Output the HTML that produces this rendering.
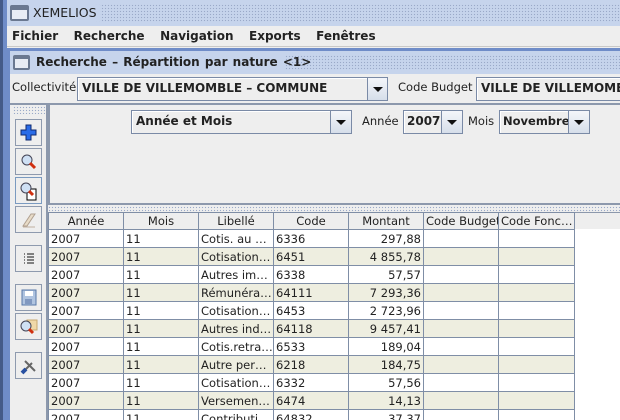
<!DOCTYPE html>
<html><head><meta charset="utf-8"><style>
*{margin:0;padding:0;box-sizing:border-box}
html{width:620px;height:420px;overflow:hidden}
body{width:620px;height:420px;overflow:hidden;background:#eeeeee;font-family:"DejaVu Sans","Liberation Sans",sans-serif;font-size:12px;color:#222;position:relative}
.a{position:absolute}
.dots{background-image:radial-gradient(#9aa9c8 0.7px,transparent 0.8px);background-size:3px 3px}
.combo{position:absolute;background:#eeeeee;border:1px solid #7a8aa6;box-shadow:inset 1px 1px 0 #fff;font-weight:bold;font-size:12px;line-height:21px;padding-left:4px;white-space:nowrap;overflow:hidden}
.combo .btn{position:absolute;right:0;top:0;bottom:0;width:21px;border-left:1px solid #7a8aa6;background:linear-gradient(#f4f6fa,#d6deea)}
.combo .btn:after{content:"";position:absolute;left:5px;top:9px;border-left:5px solid transparent;border-right:5px solid transparent;border-top:5px solid #111}
.tb{position:absolute;left:15px;width:27px;height:27px;border:1px solid #8e9aae;background:#eeeeee}
table{border-collapse:collapse;position:absolute;left:48px;top:212px;table-layout:fixed;width:526px}
td,th{height:18px;border:1px solid #7f8ea6;font-weight:normal;font-size:11.5px;padding:0 2px;white-space:nowrap;overflow:hidden;text-align:left;font-family:"DejaVu Sans",sans-serif;line-height:16px}
th{height:17px;text-align:center;background:#eeeeee;text-overflow:clip}
tbody tr:nth-child(odd) td{background:#fff}
tbody tr:nth-child(even) td{background:#eeeee0}
td.r{text-align:right}
</style></head><body>
<div class="a" style="left:0;top:0;width:3px;height:420px;background:#445a88"></div>
<div class="a" style="left:3px;top:0;width:4px;height:420px;background:#6f8cc8"></div>
<div class="a" style="left:7px;top:0;width:613px;height:26px;background:#c6d4ec"></div>
<div class="a dots" style="left:95px;top:4px;width:525px;height:18px"></div>
<div class="a" style="left:10px;top:5px;width:19px;height:16px;border:2px solid #6a7890;border-radius:2px;background:#e8ecf4;border-top-width:5px"></div>
<div class="a" style="left:33px;top:5px;font-size:12.5px;line-height:16px;background:#c6d4ec;padding-right:3px">XEMELIOS</div>
<div class="a" style="left:7px;top:26px;width:613px;height:21px;background:#eeeeee;border-bottom:1px solid #c8c8c8"></div>
<div class="a" style="left:12px;top:29px;font-weight:bold;font-size:12px;word-spacing:1px">Fichier&nbsp;&nbsp; Recherche&nbsp;&nbsp; Navigation&nbsp;&nbsp; Exports&nbsp;&nbsp; Fenêtres</div>
<div class="a" style="left:7px;top:48px;width:613px;height:372px;background:#6f8cc8"></div>
<div class="a" style="left:10px;top:51px;width:610px;height:369px;background:#eeeeee"></div>
<div class="a" style="left:10px;top:51px;width:610px;height:23px;background:#c6d4ec"></div>
<div class="a dots" style="left:285px;top:55px;width:335px;height:15px"></div>
<div class="a" style="left:13px;top:55px;width:17px;height:15px;border:2px solid #6a7890;border-radius:2px;background:#e8ecf4;border-top-width:4px"></div>
<div class="a" style="left:36px;top:55px;font-weight:bold;font-size:12px;line-height:15px;word-spacing:1px">Recherche – Répartition par nature &lt;1&gt;</div>
<div class="a" style="left:12px;top:80px;font-size:11.5px">Collectivité</div>
<div class="combo" style="left:77px;top:77px;width:311px;height:24px">VILLE DE VILLEMOMBLE – COMMUNE<span class="btn" style="width:20px"></span></div>
<div class="a" style="left:398px;top:80px;font-size:11.5px">Code Budget</div>
<div class="combo" style="left:476px;top:77px;width:150px;height:24px">VILLE DE VILLEMOMBLE</div>
<div class="a" style="left:10px;top:103px;width:610px;height:2px;background:#8c98ac"></div>
<div class="a dots" style="left:13px;top:106px;width:32px;height:8px"></div>
<div class="a" style="left:46px;top:104px;width:2px;height:316px;background:#8c98ac"></div>
<div class="tb" style="top:119px"><svg width="25" height="25"><path d="M10 5h5v5h5v5h-5v5h-5v-5h-5v-5h5z" fill="#2a6ce8" stroke="#102a70"/></svg></div>
<div class="tb" style="top:148px"><svg width="25" height="25"><circle cx="11" cy="11" r="5" fill="#cfe0f4" stroke="#445"/><path d="M14 14l5 5" stroke="#d03010" stroke-width="3"/></svg></div>
<div class="tb" style="top:177px;border-color:#7a9ac0"><svg width="25" height="25"><path d="M13 11h7v11h-9v-7" fill="#fff" stroke="#000"/><circle cx="10" cy="10" r="5" fill="#cfe0f4" stroke="#445"/><path d="M13 13l4 4" stroke="#d03010" stroke-width="3"/></svg></div>
<div class="tb" style="top:206px"><svg width="25" height="25"><path d="M7 19l8-12h4l-8 12z" fill="#e8dcc8" stroke="#b0a090"/><path d="M7 20h12" stroke="#c0b0a0"/></svg></div>
<div class="tb" style="top:245px"><svg width="25" height="25"><g stroke="#111"><path d="M8 8h1M8 11h1M8 14h1M8 17h1M11 8h7M11 11h7M11 14h7M11 17h7"/></g></svg></div>
<div class="tb" style="top:284px"><svg width="25" height="25"><rect x="6" y="5" width="14" height="15" fill="#b0c4e0" stroke="#5878a8"/><rect x="9" y="6" width="8" height="5" fill="#fff"/><rect x="9" y="14" width="7" height="5" fill="#8098c0"/></svg></div>
<div class="tb" style="top:313px"><svg width="25" height="25"><rect x="11" y="6" width="10" height="10" fill="#f0d8a8" stroke="#c8a870"/><circle cx="10" cy="12" r="5" fill="#cfe0f4" stroke="#445"/><path d="M13 15l4 4" stroke="#d03010" stroke-width="3"/></svg></div>
<div class="tb" style="top:352px"><svg width="25" height="25"><path d="M7 19l9-9M9 8l10 10" stroke="#666" stroke-width="2"/><path d="M6 20l4-4" stroke="#2850a0" stroke-width="4"/></svg></div>
<div class="a" style="left:48px;top:104px;width:572px;height:101px;border-left:2px solid #8c98ac;border-bottom:2px solid #8c98ac"></div>
<div class="combo" style="left:131px;top:110px;width:221px;height:24px">Année et Mois<span class="btn"></span></div>
<div class="a" style="left:362px;top:114px;font-size:11.5px">Année</div>
<div class="combo" style="left:403px;top:110px;width:60px;height:24px;padding-left:3px">2007<span class="btn"></span></div>
<div class="a" style="left:468px;top:114px;font-size:11.5px">Mois</div>
<div class="combo" style="left:499px;top:110px;width:91px;height:24px;font-size:11.5px;padding-left:3px">Novembre<span class="btn"></span></div>
<div class="a dots" style="left:48px;top:206px;width:572px;height:6px"></div>
<div class="a" style="left:48px;top:212px;width:572px;height:208px;background:#fff;border-top:1px solid #8c98ac"></div>
<div class="a" style="left:48px;top:213px;width:572px;height:16px;background:#eeeeee"></div>
<table>
<colgroup><col style="width:75px"><col style="width:75px"><col style="width:75px"><col style="width:75px"><col style="width:75px"><col style="width:75px"><col style="width:76px"></colgroup>
<thead><tr><th>Année</th><th>Mois</th><th>Libellé</th><th>Code</th><th>Montant</th><th>Code Budget</th><th>Code Fonc…</th></tr></thead>
<tbody>
<tr><td>2007</td><td>11</td><td>Cotis. au …</td><td>6336</td><td class="r">297,88</td><td></td><td></td></tr>
<tr><td>2007</td><td>11</td><td>Cotisation…</td><td>6451</td><td class="r">4 855,78</td><td></td><td></td></tr>
<tr><td>2007</td><td>11</td><td>Autres im…</td><td>6338</td><td class="r">57,57</td><td></td><td></td></tr>
<tr><td>2007</td><td>11</td><td>Rémunéra…</td><td>64111</td><td class="r">7 293,36</td><td></td><td></td></tr>
<tr><td>2007</td><td>11</td><td>Cotisation…</td><td>6453</td><td class="r">2 723,96</td><td></td><td></td></tr>
<tr><td>2007</td><td>11</td><td>Autres ind…</td><td>64118</td><td class="r">9 457,41</td><td></td><td></td></tr>
<tr><td>2007</td><td>11</td><td>Cotis.retra…</td><td>6533</td><td class="r">189,04</td><td></td><td></td></tr>
<tr><td>2007</td><td>11</td><td>Autre per…</td><td>6218</td><td class="r">184,75</td><td></td><td></td></tr>
<tr><td>2007</td><td>11</td><td>Cotisation…</td><td>6332</td><td class="r">57,56</td><td></td><td></td></tr>
<tr><td>2007</td><td>11</td><td>Versemen…</td><td>6474</td><td class="r">14,13</td><td></td><td></td></tr>
<tr><td>2007</td><td>11</td><td>Contributi…</td><td>64832</td><td class="r">37,37</td><td></td><td></td></tr>
</tbody>
</table>
</body></html>
